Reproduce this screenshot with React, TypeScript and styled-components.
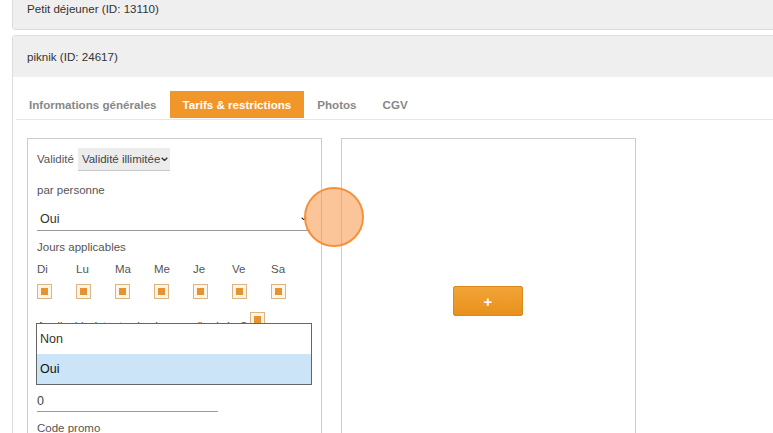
import React from 'react';
import styled, {createGlobalStyle} from "styled-components";

const GlobalStyle = createGlobalStyle`
    html, body {
        margin: 0;
        padding: 0;
        background: #fff;
        overflow: hidden;
        font-family: "Liberation Sans", Arial, sans-serif;
    }
`

const days = ["Di", "Lu", "Ma", "Me", "Je", "Ve", "Sa"];
const tabs = ["Informations générales", "Tarifs & restrictions", "Photos", "CGV"];

const Chevron: React.FC<{ size?: number }> = ({size = 7}) => (
    <svg width={size} height={size * 0.6} viewBox="0 0 10 6">
        <path d="M1 1 L5 5 L9 1" fill="none" stroke="#333" strokeWidth="2"/>
    </svg>
);

const Check: React.FC = () => <Box><Dot/></Box>;

export default function App() {
    return <>
        <GlobalStyle/>
        <Page>
            <Card>
                <CardHeader>Petit déjeuner (ID: 13110)</CardHeader>
            </Card>
            <Card>
                <CardHeader>piknik (ID: 24617)</CardHeader>
                <CardBody>
                    <Tabs>
                        {tabs.map((t, i) => <Tab key={t} $active={i === 1}>{t}</Tab>)}
                    </Tabs>
                    <Columns>
                        <Panel>
                            <InlineRow>
                                <Label>Validité</Label>
                                <GraySelect>Validité illimitée<Chevron/></GraySelect>
                            </InlineRow>
                            <Label $top={13}>par personne</Label>
                            <LineSelect>
                                <span>Oui</span>
                                <Chevron size={6}/>
                            </LineSelect>
                            <Label $top={10}>Jours applicables</Label>
                            <Days>
                                {days.map(d => <Day key={d}>
                                    <Label>{d}</Label>
                                    <Check/>
                                </Day>)}
                            </Days>
                            <CheckRow>
                                <Label>Applicable à toutes les heures d'arrivée ?</Label>
                                <Check/>
                            </CheckRow>
                            <LineSelect $width={272} $top={6}>
                                <span>Oui</span>
                                <Chevron size={6}/>
                            </LineSelect>
                            <LineInput $top={33}>0</LineInput>
                            <Label $top={10}>Code promo</Label>
                            <LineInput/>
                            <Listbox>
                                <Option>Non</Option>
                                <Option $selected>Oui</Option>
                            </Listbox>
                        </Panel>
                        <Panel $center>
                            <AddButton>+</AddButton>
                        </Panel>
                    </Columns>
                </CardBody>
            </Card>
        </Page>
        <Touch/>
    </>
}

const Page = styled.div`
    width: 820px;
    margin-top: -13px;
    padding-left: 12px;
`

const Card = styled.div`
    border: 1px solid #ddd;
    border-radius: 3px;
    background: #fff;
    margin-bottom: 5px;
    overflow: hidden;
`

const CardHeader = styled.div`
    height: 41px;
    display: flex;
    align-items: center;
    padding-left: 14px;
    background: #efefef;
    font-size: 11.6px;
    color: #333;
`

const CardBody = styled.div`
    padding: 14px 0 0 3px;
`

const Tabs = styled.div`
    display: flex;
    border-bottom: 1px solid #e6e6e6;
`

const Tab = styled.div<{ $active?: boolean }>`
    height: 27px;
    display: flex;
    align-items: center;
    padding: 0 13px;
    margin-bottom: 1px;
    font-size: 11.6px;
    font-weight: bold;
    color: ${p => p.$active ? "#fff" : "#888"};
    background: ${p => p.$active ? "#f0962a" : "transparent"};
`

const Columns = styled.div`
    display: flex;
    gap: 19px;
    padding: 18px 0 0 11px;
`

const Panel = styled.div<{ $center?: boolean }>`
    position: relative;
    width: 274px;
    height: 330px;
    border: 1px solid #ccc;
    padding: ${p => p.$center ? "147px" : "9px"} 10px 0 9px;
    display: flex;
    flex-direction: column;
    align-items: ${p => p.$center ? "center" : "flex-start"};
`

const InlineRow = styled.div`
    display: flex;
    align-items: center;
    gap: 4px;
`

const CheckRow = styled.div`
    display: flex;
    align-items: flex-end;
    gap: 3px;
    margin-top: 13px;

    & > ${() => Label} {
        margin-bottom: -6px;
    }
`

const Label = styled.div<{ $top?: number }>`
    font-size: 11.5px;
    line-height: 13px;
    color: #555;
    margin-top: ${p => p.$top ?? 0}px;
`

const GraySelect = styled.div`
    height: 23px;
    display: flex;
    align-items: center;
    gap: 1px;
    padding: 0 2px 0 4px;
    background: #ececec;
    border-bottom: 1px solid #c8c8c8;
    box-sizing: border-box;
    font-size: 11.5px;
    color: #444;
`

const LineSelect = styled.div<{ $width?: number; $top?: number }>`
    width: ${p => p.$width ?? 273}px;
    height: 24px;
    box-sizing: border-box;
    margin-top: ${p => p.$top ?? 10}px;
    padding: 0 3px;
    display: flex;
    align-items: center;
    justify-content: space-between;
    border-bottom: 1px solid #999;
    font-size: 12.5px;
    color: #333;
`

const LineInput = styled.div<{ $top?: number }>`
    width: 181px;
    height: 22px;
    box-sizing: border-box;
    margin-top: ${p => p.$top ?? 0}px;
    display: flex;
    align-items: center;
    border-bottom: 1px solid #999;
    font-size: 12.5px;
    color: #444;
`

const Days = styled.div`
    display: grid;
    grid-template-columns: repeat(7, 39px);
    margin-top: 9px;
`

const Day = styled.div`
    display: flex;
    flex-direction: column;
    gap: 8px;
`

const Box = styled.div`
    width: 15px;
    height: 15px;
    box-sizing: border-box;
    border: 1px solid #dcb582;
    background: #fdf5ea;
    display: flex;
    align-items: center;
    justify-content: center;
`

const Dot = styled.div`
    width: 7px;
    height: 7px;
    background: #e59330;
`

const Listbox = styled.div`
    position: absolute;
    top: 184px;
    left: 8px;
    width: 276px;
    border: 1px solid #666;
    background: #fff;
    box-sizing: border-box;
`

const Option = styled.div<{ $selected?: boolean }>`
    height: 30px;
    display: flex;
    align-items: center;
    padding-left: 3px;
    font-size: 12.5px;
    color: ${p => p.$selected ? "#111" : "#333"};
    background: ${p => p.$selected ? "#cce4f7" : "#fff"};
`

const AddButton = styled.div`
    width: 70px;
    height: 30px;
    box-sizing: border-box;
    border: 1px solid #d88a1c;
    border-radius: 2px;
    background: linear-gradient(#f2a437, #e8911c);
    color: #fff;
    font-weight: bold;
    font-size: 15px;
    display: flex;
    align-items: center;
    justify-content: center;
`

const Touch = styled.div`
    position: fixed;
    left: 304px;
    top: 187px;
    width: 60px;
    height: 60px;
    box-sizing: border-box;
    border-radius: 50%;
    border: 2px solid #f5913a;
    background: rgba(250, 150, 70, 0.55);
`
